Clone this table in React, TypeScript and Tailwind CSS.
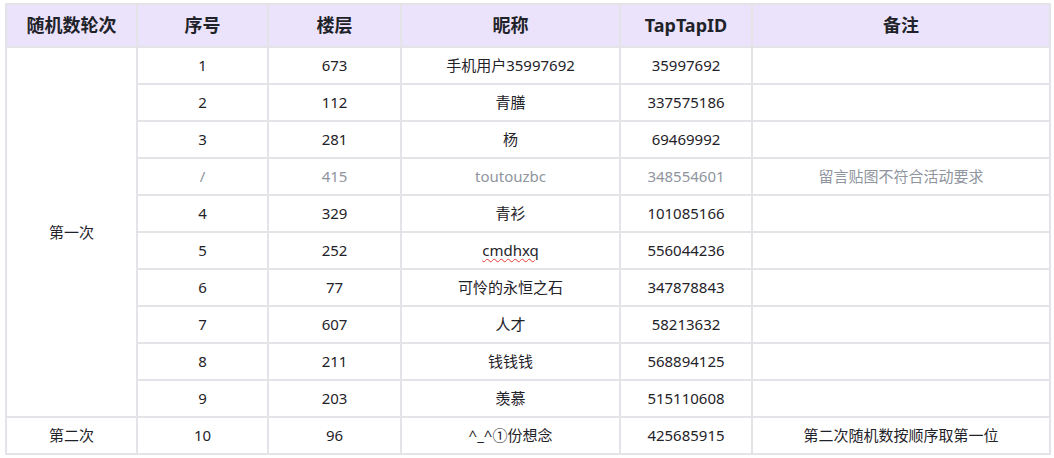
import React from "react";

type Row = { seq: string; floor: string; name: React.ReactNode; id: string; note?: string; grey?: boolean };

const rows: Row[] = [
  { seq: "1", floor: "673", name: "手机用户35997692", id: "35997692" },
  { seq: "2", floor: "112", name: "青膳", id: "337575186" },
  { seq: "3", floor: "281", name: "杨", id: "69469992" },
  { seq: "/", floor: "415", name: "toutouzbc", id: "348554601", note: "留言贴图不符合活动要求", grey: true },
  { seq: "4", floor: "329", name: "青衫", id: "101085166" },
  {
    seq: "5",
    floor: "252",
    name: <span className="underline decoration-wavy decoration-[#e53935] decoration-1 underline-offset-2">cmdhxq</span>,
    id: "556044236",
  },
  { seq: "6", floor: "77", name: "可怜的永恒之石", id: "347878843" },
  { seq: "7", floor: "607", name: "人才", id: "58213632" },
  { seq: "8", floor: "211", name: "钱钱钱", id: "568894125" },
  { seq: "9", floor: "203", name: "羡慕", id: "515110608" },
];

const cell = "border-2 border-[#e4e4e8] text-center align-middle p-0";

export default function App() {
  return (
    <div
      className="bg-white w-[1054px] h-[458px] pt-[3px] pl-[5px]"
      style={{ fontFamily: '"Noto Sans", "Noto Sans CJK SC", sans-serif' }}
    >
      <table className="border-collapse table-fixed w-[1044px] text-[15px] text-[#1f2329]">
        <colgroup>
          <col className="w-[131px]" />
          <col className="w-[131px]" />
          <col className="w-[133px]" />
          <col className="w-[219px]" />
          <col className="w-[132px]" />
          <col className="w-[298px]" />
        </colgroup>
        <thead>
          <tr className="h-[43px] bg-[#ebe3fc] text-[18px] font-bold text-[#1f2329]">
            <th className={cell}>随机数轮次</th>
            <th className={cell}>序号</th>
            <th className={cell}>楼层</th>
            <th className={cell}>昵称</th>
            <th className={cell}>TapTapID</th>
            <th className={cell}>备注</th>
          </tr>
        </thead>
        <tbody>
          {rows.map((r, i) => (
            <tr key={i} className={`h-[37px] ${r.grey ? "text-[#8f959e]" : ""}`}>
              {i === 0 && (
                <td rowSpan={10} className={`${cell} text-[#1f2329]`}>
                  第一次
                </td>
              )}
              <td className={cell}>{r.seq}</td>
              <td className={cell}>{r.floor}</td>
              <td className={cell}>{r.name}</td>
              <td className={cell}>{r.id}</td>
              <td className={cell}>{r.note ?? ""}</td>
            </tr>
          ))}
          <tr className="h-[37px]">
            <td className={cell}>第二次</td>
            <td className={cell}>10</td>
            <td className={cell}>96</td>
            <td className={cell}>^_^①份想念</td>
            <td className={cell}>425685915</td>
            <td className={cell}>第二次随机数按顺序取第一位</td>
          </tr>
        </tbody>
      </table>
    </div>
  );
}
